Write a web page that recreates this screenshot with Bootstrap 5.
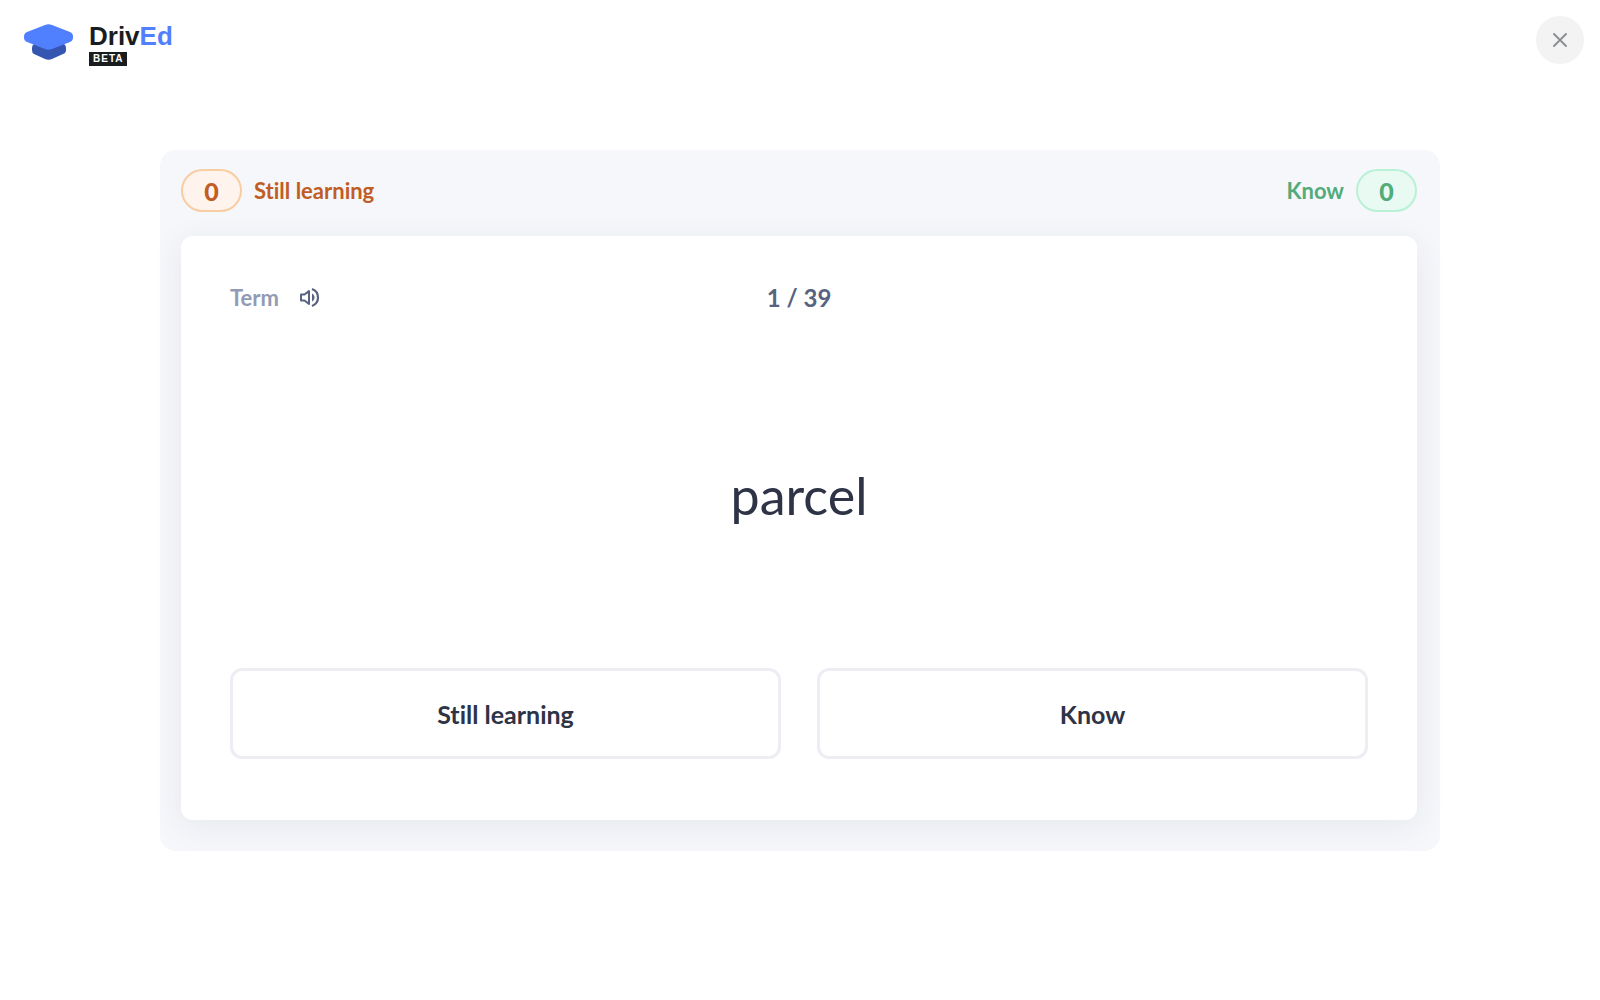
<!DOCTYPE html>
<html lang="en">
<head>
<meta charset="utf-8">
<meta name="viewport" content="width=device-width, initial-scale=1">
<title>DrivEd – Flashcards</title>
<link rel="stylesheet" href="https://cdn.jsdelivr.net/npm/bootstrap@5.3.0/dist/css/bootstrap.min.css">
<style>
  body { font-family: Lato, "Noto Sans", sans-serif; color: #2e3446; background: #fff; }
  body, button { font-variant-ligatures: none; }
  .topbar { padding: 16px 16px 0 24px; }
  .brand-name { font: 700 26px/24px "Liberation Sans", Arial, sans-serif; color: #1a1d1f; }
  .brand-name span { color: #5180ff; }
  .brand-beta { font: 700 10px/14px "Liberation Sans", Arial, sans-serif; letter-spacing: 1px; color: #fff; background: #1a1d1f; padding: 0 4px; margin-top: 4px; }
  .close-btn { width: 48px; height: 48px; background: #f3f3f4; }
  .deck { width: 80%; margin: 84px auto 0; padding: 19px 23px 31px 21px; border-radius: 16px; background: #f6f7fb; }
  .score { font-size: 22px; line-height: 44px; font-weight: 700; }
  .pill { width: 61px; height: 43px; line-height: 41px; font-size: 25px; font-weight: 900; border: 2px solid; border-radius: 22px; text-align: center; }
  .learning { color: #c05d25; }
  .learning .pill { background: #fff4ed; border-color: #f8cda2; }
  .known { color: #52ab7b; }
  .known .pill { background: #e9faf2; border-color: #b9f1d6; }
  .flash { margin-top: 23px; padding: 44px 49px 61px; border-radius: 12px; background: #fff; box-shadow: 0 6px 32px rgba(40, 46, 62, .08); }
  .side-label { font-size: 22px; line-height: 36px; font-weight: 700; color: #939bb4; }
  .audio-btn { color: #586380; }
  .counter { font-size: 24px; line-height: 36px; font-weight: 700; color: #586380; }
  .term { font-size: 52px; line-height: 60px; min-height: 352px; padding-top: 6px; }
  .answers { gap: 36px; }
  .answer { height: 91px; border: 3px solid #edeef4; border-radius: 12px; background: #fff; font-size: 25px; line-height: 36px; font-weight: 700; color: #2e3446; }
  .answer:hover { background: #f5f6fa; border-color: #d9dde8; }
</style>
<script defer src="https://cdn.jsdelivr.net/npm/bootstrap@5.3.0/dist/js/bootstrap.bundle.min.js"></script>
</head>
<body>
<header class="topbar d-flex justify-content-between align-items-start">
  <a href="#" class="d-flex text-decoration-none pt-2" aria-label="DrivEd beta">
    <svg width="49" height="36" viewBox="0 0 49 36" aria-hidden="true">
      <path fill="#3556b0" d="M12 18h25l3 2q2 1 2 4v2q0 3-3 4l-11 5q-3.500 1.500-7 0L10 30q-2-1-2-4v-2q0-3 2-4z"/>
      <path fill="#5180ff" d="M21 1q3.500-1.500 7 0l18 7q3 1.300 3 4.500v1q0 3.200-3 4.500l-18 7q-3.500 1.500-7 0L3 18q-3-1.300-3-4.500v-1Q0 9.300 3 8z"/>
    </svg>
    <div class="d-flex flex-column align-items-start ms-3">
      <div class="brand-name">Driv<span>Ed</span></div>
      <div class="brand-beta">BETA</div>
    </div>
  </a>
  <button type="button" class="close-btn btn rounded-circle border-0 p-0 d-flex align-items-center justify-content-center" aria-label="Close">
    <svg width="16" height="16" viewBox="0 0 16 16" fill="none" stroke="#8d9094" stroke-width="2" stroke-linecap="round" aria-hidden="true"><path d="M2 2l12 12M14 2L2 14"/></svg>
  </button>
</header>

<main class="deck">
  <div class="score d-flex justify-content-between">
    <div class="learning d-flex"><span class="pill me-2">0</span><span class="ms-1">Still learning</span></div>
    <div class="known d-flex"><span class="me-1">Know</span><span class="pill ms-2">0</span></div>
  </div>
  <section class="flash">
    <div class="row g-0 align-items-center">
      <div class="col d-flex align-items-center">
        <span class="side-label">Term</span>
        <button type="button" class="audio-btn btn border-0 p-0 ms-3 d-flex" aria-label="Listen to the term">
          <svg width="28" height="24" viewBox="0 0 28 24" fill="none" stroke="currentColor" stroke-width="2" stroke-linejoin="round" aria-hidden="true">
            <path d="M6 8.500h3.500L14 5v13l-4.500-3.500H6z"/>
            <path stroke-width="2.200" d="M17 3c4 1.500 6 4.500 6 8.500s-2 7-6 8.500"/>
            <path fill="currentColor" stroke="none" d="M17 7.500c1.700 1 2.500 2.300 2.500 4s-.8 3-2.500 4z"/>
          </svg>
        </button>
      </div>
      <div class="col-auto counter">1 / 39</div>
      <div class="col"></div>
    </div>
    <div class="term d-flex align-items-center justify-content-center">parcel</div>
    <div class="answers d-flex">
      <button type="button" class="answer flex-fill w-50">Still learning</button>
      <button type="button" class="answer flex-fill w-50">Know</button>
    </div>
  </section>
</main>
</body>
</html>
